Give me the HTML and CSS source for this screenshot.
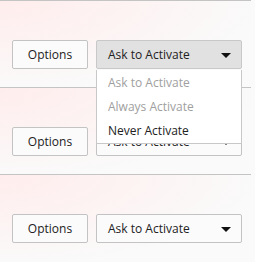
FILE: index.html
```html
<!DOCTYPE html>
<html>
<head>
<meta charset="utf-8">
<link rel="stylesheet" href="styles.css">
</head>
<body>
<div class="list">
  <div class="row">
    <button class="btn">Options</button>
    <div class="select open">
      <span class="label">Ask to Activate</span>
      <span class="arrow"></span>
      <ul class="menu">
        <li class="item muted">Ask to Activate</li>
        <li class="item muted">Always Activate</li>
        <li class="item">Never Activate</li>
      </ul>
    </div>
  </div>
  <div class="row">
    <button class="btn">Options</button>
    <div class="select">
      <span class="label">Ask to Activate</span>
      <span class="arrow"></span>
    </div>
  </div>
  <div class="row">
    <button class="btn">Options</button>
    <div class="select">
      <span class="label">Ask to Activate</span>
      <span class="arrow"></span>
    </div>
  </div>
</div>
</body>
</html>
```
FILE: styles.css
```css
html, body {
  margin: 0;
  padding: 0;
  background: #fafafa;
  font-family: "Open Sans", "Noto Sans", sans-serif;
  font-size: 12px;
  color: #222;
}
.list {
  width: 251px;
}
.row {
  position: relative;
  height: 87px;
  box-sizing: border-box;
  border-top: 1px solid #c4c4c4;
  padding: 39px 0 0 12px;
  display: flex;
  align-items: flex-start;
  gap: 8px;
  background: radial-gradient(ellipse 260px 90px at 0 0, #ffeded 0%, #fdf3f3 50%, #fafafa 100%);
}
.row:first-child { z-index: 2; }
.btn {
  width: 76px;
  height: 29px;
  border: 1px solid #c3c3c3;
  border-radius: 2px;
  background: #fbfbfb;
  font: inherit;
  color: #222;
  padding: 0;
  margin: 0;
}
.select {
  position: relative;
  width: 146px;
  height: 29px;
  box-sizing: border-box;
  border: 1px solid #c3c3c3;
  border-radius: 2px;
  background: #fbfbfb;
  display: flex;
  align-items: center;
  padding-left: 11px;
}
.select.open {
  background: #e1e1e1;
  border-color: #c8c8c8;
}
.label { flex: 1; }
.arrow {
  width: 0;
  height: 0;
  border-left: 5px solid transparent;
  border-right: 5px solid transparent;
  border-top: 5px solid #111;
  margin-right: 10px;
  margin-top: 1px;
}
.menu {
  position: absolute;
  left: -1px;
  top: 29px;
  width: 146px;
  box-sizing: border-box;
  margin: 0;
  padding: 0 0 1px;
  list-style: none;
  background: #fff;
  border: 1px solid #c8c8c8;
  border-top: none;
}
.item {
  height: 24px;
  line-height: 25px;
  padding-left: 11px;
  color: #222;
}
.item.muted { color: #a0a0a0; }
```
